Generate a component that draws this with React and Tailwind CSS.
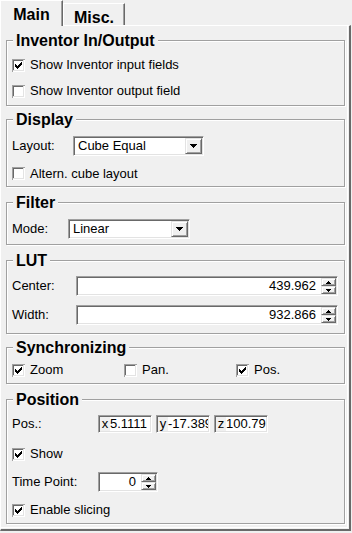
import React from 'react';

const sunken = 'border border-t-[#a0a0a0] border-l-[#a0a0a0] border-b-white border-r-white shadow-[inset_1px_1px_0_#696969,inset_-1px_-1px_0_#e3e3e3] p-px';
const raised = 'bg-[#f0f0f0] border border-t-[#e3e3e3] border-l-[#e3e3e3] border-b-[#696969] border-r-[#696969] shadow-[inset_1px_1px_0_#ffffff,inset_-1px_-1px_0_#a0a0a0]';

const CheckBox = ({ checked }) => (
  <svg width="13" height="13" viewBox="0 0 13 13" className="shrink-0" shapeRendering="crispEdges">
    <rect x="0" y="0" width="13" height="13" fill="#fff" />
    <path d="M0.5 13V0.5H13" fill="none" stroke="#a0a0a0" />
    <path d="M1.5 12V1.5H12" fill="none" stroke="#696969" />
    <path d="M1 11.5H11.5V1" fill="none" stroke="#e3e3e3" />
    {checked && [5, 6, 7, 6, 5, 4, 3].map((y, i) => (
      <rect key={i} x={3 + i} y={y} width="1" height="3" fill="#000" />
    ))}
  </svg>
);

const Arrow = ({ up, size = 5 }) => {
  const rows = size === 7 ? [7, 5, 3, 1] : [5, 3, 1];
  const list = up ? [...rows].reverse() : rows;
  return (
    <svg width={size} height={rows.length} shapeRendering="crispEdges">
      {list.map((w, i) => (
        <rect key={i} x={(size - w) / 2} y={i} width={w} height="1" fill="#000" />
      ))}
    </svg>
  );
};

const Check = ({ checked, label, className = '' }) => (
  <div className={`flex items-center gap-[5px] ${className}`}>
    <CheckBox checked={checked} />
    <span>{label}</span>
  </div>
);

const Combo = ({ value, className }) => (
  <div className={`${sunken} h-[20px] bg-white flex ${className}`}>
    <span className="flex-1 pl-[3px] leading-[16px]">{value}</span>
    <div className={`${raised} w-[17px] h-[16px] flex items-center justify-center`}>
      <Arrow size={7} />
    </div>
  </div>
);

const Spin = ({ value, className }) => (
  <div className={`${sunken} h-[20px] bg-white flex ${className}`}>
    <span className="flex-1 text-right pr-[5px] leading-[16px]">{value}</span>
    <div className="flex flex-col w-[15px]">
      <div className={`${raised} h-[8px] flex items-center justify-center`}>
        <Arrow up />
      </div>
      <div className={`${raised} h-[8px] flex items-center justify-center`}>
        <Arrow />
      </div>
    </div>
  </div>
);

const PosField = ({ axis, value }) => (
  <div className={`${sunken} h-[18px] w-[54px] flex overflow-hidden`}>
    <span className="w-[10px] shrink-0 bg-[#f0f0f0] text-center leading-[14px]">{axis}</span>
    <span className="flex-1 bg-white whitespace-nowrap overflow-hidden leading-[14px]">{value}</span>
  </div>
);

const Group = ({ title, className = '', children }) => (
  <div className={`w-[339px] border border-[#a0a0a0] shadow-[inset_1px_1px_0_#ffffff,1px_1px_0_#ffffff] pl-[5px] flex flex-col ${className}`}>
    <div className="-mt-[9px] ml-[1px] px-[3px] bg-[#f0f0f0] w-fit font-bold text-[16px] leading-[18px]">{title}</div>
    {children}
  </div>
);

export default function App() {
  return (
    <div className="w-[352px] h-[533px] bg-[#f0f0f0] text-black text-[13px] font-['Liberation_Sans',Arial,sans-serif]">
      <div className="flex items-start h-[25px]">
        <div className="relative z-10 w-[63px] h-[26px] bg-[#f0f0f0] border-l border-t border-r border-l-white border-t-white border-r-[#696969] shadow-[inset_-1px_0_0_#a0a0a0] text-center pt-[5px] font-bold text-[16px] leading-[18px]">
          Main
        </div>
        <div className="mt-[3px] w-[62px] h-[22px] border-l border-t border-r border-l-white border-t-white border-r-[#696969] shadow-[inset_-1px_0_0_#a0a0a0] text-center pt-[5px] font-bold text-[16px] leading-[18px]">
          Misc.
        </div>
      </div>

      <div className="w-[351px] h-[506px] border-l border-t border-r-2 border-b-2 border-l-white border-t-white border-r-[#696969] border-b-[#696969] shadow-[inset_-1px_-1px_0_#f0f0f0,inset_-2px_-2px_0_#ffffff] pt-[14px] pl-[5px] flex flex-col">
        <Group title="Inventor In/Output" className="pb-px">
          <Check checked label="Show Inventor input fields" className="mt-[2px] h-[26px]" />
          <Check label="Show Inventor output field" className="h-[26px]" />
        </Group>

        <Group title="Display" className="mt-[13px]">
          <div className="mt-[6px] h-[22px] flex items-center">
            <span className="w-[61px]">Layout:</span>
            <Combo value="Cube Equal" className="w-[131px]" />
          </div>
          <Check label="Altern. cube layout" className="mt-[4px] h-[25px]" />
        </Group>

        <Group title="Filter" className="mt-[15px] pb-[4px]">
          <div className="mt-[6px] h-[22px] flex items-center">
            <span className="w-[56px]">Mode:</span>
            <Combo value="Linear" className="w-[122px]" />
          </div>
        </Group>

        <Group title="LUT" className="mt-[15px] pb-[7px]">
          <div className="mt-[5px] h-[22px] flex items-center">
            <span className="w-[64px]">Center:</span>
            <Spin value="439.962" className="w-[262px]" />
          </div>
          <div className="mt-[7px] h-[22px] flex items-center">
            <span className="w-[64px]">Width:</span>
            <Spin value="932.866" className="w-[262px]" />
          </div>
        </Group>

        <Group title="Synchronizing" className="mt-[13px]">
          <div className="h-[26px] flex items-center">
            <Check checked label="Zoom" className="w-[112px]" />
            <Check label="Pan." className="w-[112px]" />
            <Check checked label="Pos." className="w-[100px]" />
          </div>
        </Group>

        <Group title="Position" className="mt-[15px]">
          <div className="mt-[5px] h-[20px] flex items-center">
            <span className="w-[86px]">Pos.:</span>
            <div className="flex gap-[4px]">
              <PosField axis="x" value="5.1111" />
              <PosField axis="y" value="-17.389" />
              <PosField axis="z" value="100.79" />
            </div>
          </div>
          <Check checked label="Show" className="mt-[7px] h-[26px]" />
          <div className="mt-[3px] h-[24px] flex items-center">
            <span className="w-[86px]">Time Point:</span>
            <Spin value="0" className="w-[60px]" />
          </div>
          <Check checked label="Enable slicing" className="mt-[3px] h-[26px]" />
        </Group>
      </div>
    </div>
  );
}
